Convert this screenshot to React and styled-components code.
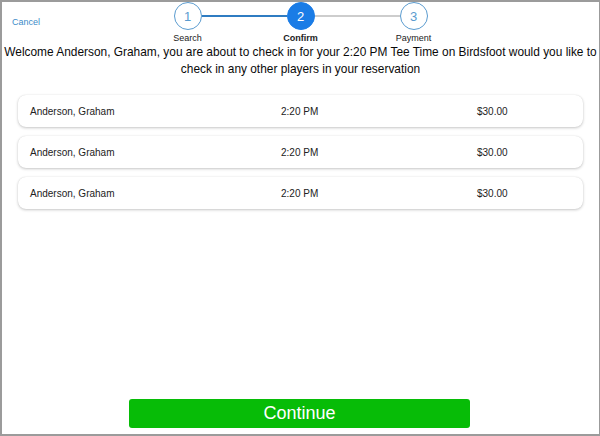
import styled, { createGlobalStyle } from 'styled-components'

const Global = createGlobalStyle`
    html, body { margin: 0; padding: 0; background: #fff; }
    body { font-family: "Liberation Sans", Arial, sans-serif; }
    * { box-sizing: border-box; }
`

const Frame = styled.div`
    width: 600px;
    height: 436px;
    border: 2px solid #9b9b9b;
    border-right-width: 1px;
    display: flex;
    flex-direction: column;
    background: #fff;
`
const Header = styled.div`
    display: grid;
    grid-template-columns: 1fr auto 1fr;
`
const Cancel = styled.a`
    font-size: 9px;
    line-height: 11px;
    color: #3d8bc9;
    margin: 15px 0 0 10px;
    cursor: pointer;
    justify-self: start;
`
const Stepper = styled.div`
    display: flex;
    align-items: flex-start;
`
const Step = styled.div`
    width: 28px;
    display: flex;
    flex-direction: column;
    align-items: center;
`
const Circle = styled.div`
    width: 28px;
    height: 28px;
    border-radius: 50%;
    display: flex;
    align-items: center;
    justify-content: center;
    font-size: 13px;
    border: 1.5px solid ${p => p.$active ? '#1a7ce6' : '#5a9bcf'};
    background: ${p => p.$active ? '#1a7ce6' : '#fff'};
    color: ${p => p.$active ? '#fff' : '#5a9bcf'};
`
const Label = styled.div`
    width: 80px;
    margin-top: 2px;
    text-align: center;
    font-size: 9px;
    line-height: 12px;
    color: #222;
    font-weight: ${p => p.$active ? 700 : 400};
`
const Connector = styled.div`
    width: 85px;
    height: 1.5px;
    margin-top: 13px;
    background: ${p => p.$done ? '#2f7cc2' : '#cdcdcd'};
`
const Welcome = styled.p`
    margin: 0;
    padding: 0 2px;
    text-align: center;
    font-size: 11.9px;
    line-height: 17px;
    color: #0a0a0a;
`
const List = styled.div`
    flex: 1;
    display: flex;
    flex-direction: column;
    gap: 9px;
    padding: 17px 16px 0 16px;
`
const Card = styled.div`
    height: 32px;
    border-radius: 8px;
    background: #fff;
    box-shadow: 0 1px 3px rgba(0,0,0,0.22), 0 0 1px rgba(0,0,0,0.12);
    display: grid;
    grid-template-columns: 251px 196px 1fr;
    align-items: center;
    padding-left: 12px;
    font-size: 10px;
    color: #222;
`
const Footer = styled.div`
    display: flex;
    justify-content: center;
    padding-bottom: 6px;
`
const ContinueBtn = styled.button`
    width: 341px;
    height: 29px;
    margin-left: -2px;
    border: none;
    border-radius: 3px;
    background: #07bc07;
    color: #fff;
    font-family: "Liberation Sans", Arial, sans-serif;
    font-size: 18px;
    cursor: pointer;
`

const steps = ['Search', 'Confirm', 'Payment']
const rows = [
    { name: 'Anderson, Graham', time: '2:20 PM', price: '$30.00' },
    { name: 'Anderson, Graham', time: '2:20 PM', price: '$30.00' },
    { name: 'Anderson, Graham', time: '2:20 PM', price: '$30.00' },
]

export default function App(){
    const current = 1
    return (
        <>
            <Global/>
            <Frame>
                <Header>
                    <Cancel>Cancel</Cancel>
                    <Stepper>
                        {steps.map((s, i) => (
                            <div key={s} style={{display:'contents'}}>
                                {i > 0 && <Connector $done={i <= current}/>}
                                <Step>
                                    <Circle $active={i === current}>{i + 1}</Circle>
                                    <Label $active={i === current}>{s}</Label>
                                </Step>
                            </div>
                        ))}
                    </Stepper>
                    <div/>
                </Header>
                <Welcome>
                    Welcome Anderson, Graham, you are about to check in for your 2:20 PM Tee Time on Birdsfoot would you like to check in any other players in your reservation
                </Welcome>
                <List>
                    {rows.map((r, i) => (
                        <Card key={i}>
                            <span>{r.name}</span>
                            <span>{r.time}</span>
                            <span>{r.price}</span>
                        </Card>
                    ))}
                </List>
                <Footer>
                    <ContinueBtn>Continue</ContinueBtn>
                </Footer>
            </Frame>
        </>
    )
}
